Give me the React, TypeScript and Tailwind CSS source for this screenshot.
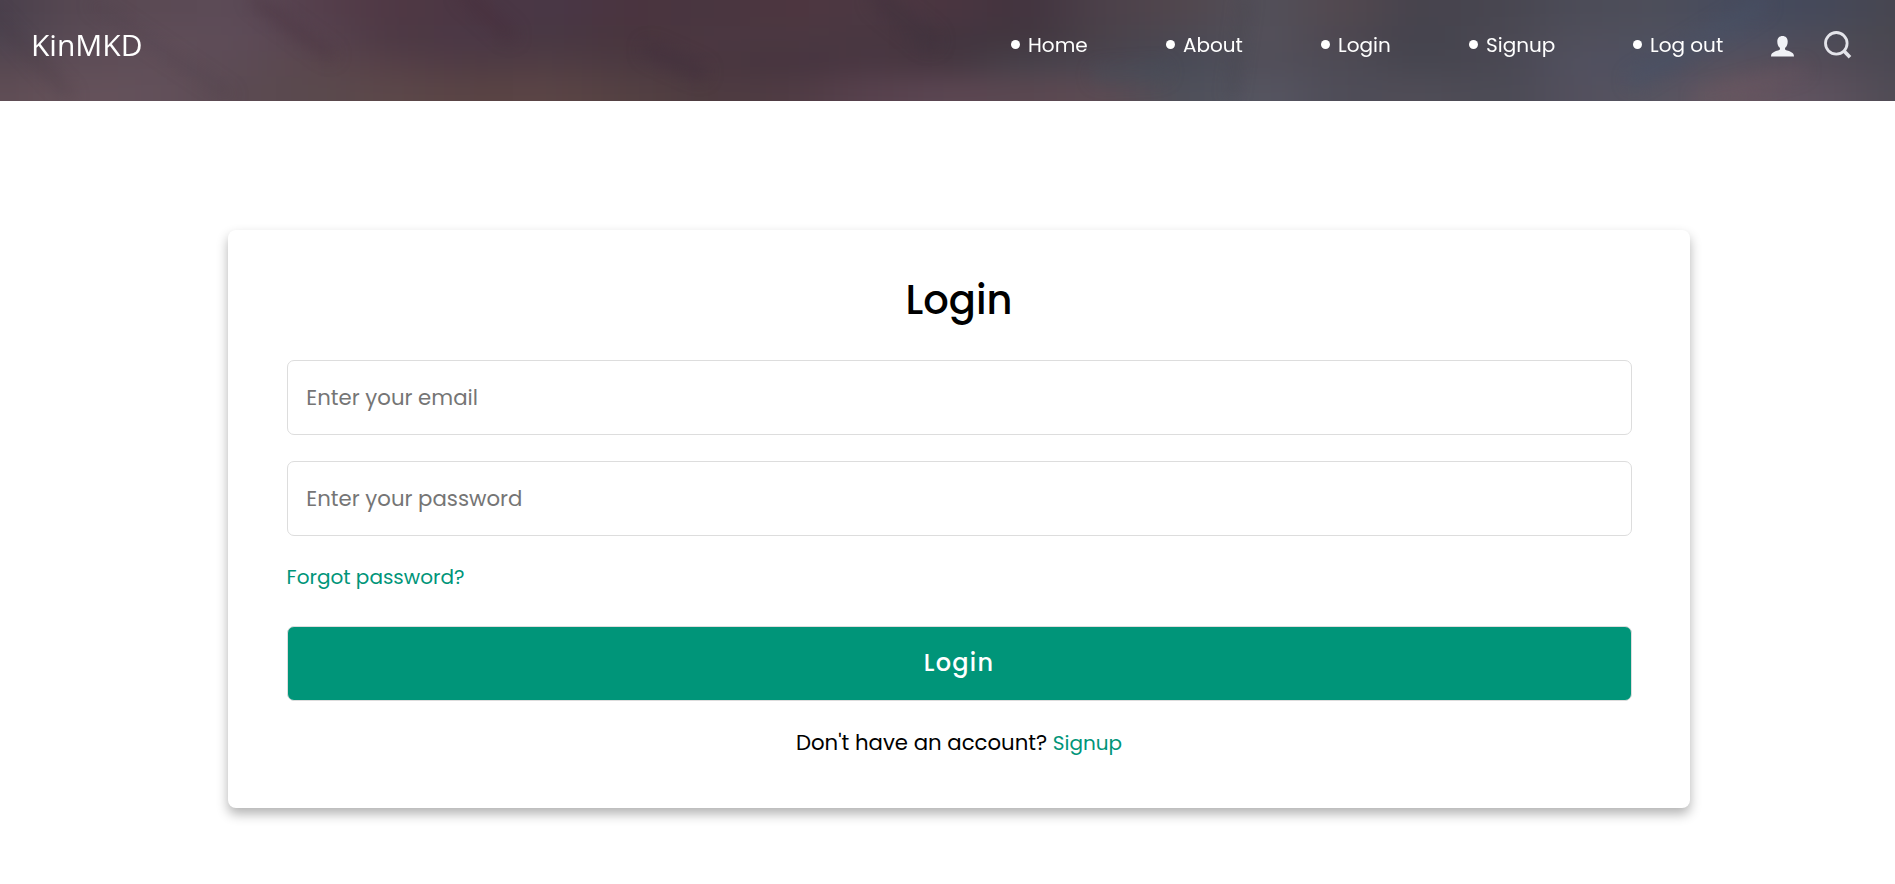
import React from "react";

const POP = "font-['Poppins','Inter',sans-serif]";

/* Cloud backdrop tones: four horizontal bands sampled every 79px. */
const BANDS: string[][] = [
  ["#4a404c", "#574852", "#5b4a54", "#5c4b57", "#553f4c", "#4f3844", "#4b3744", "#493746", "#4a343f", "#493640", "#4d3640", "#4c3842", "#4a3540", "#42343f", "#4c414a", "#51474e", "#52505a", "#52484f", "#46434d", "#484650", "#4c4c58", "#4d4e5a", "#464b5e", "#45495a", "#474650"],
  ["#4d4450", "#5a4b55", "#5f4d58", "#5e4c58", "#57434f", "#4d3944", "#4b3845", "#493843", "#49353d", "#4b3741", "#4b3841", "#493741", "#43353f", "#41363f", "#4a424a", "#4b4852", "#54515b", "#4d4750", "#44434d", "#4a4852", "#504f5b", "#4f505e", "#4d5062", "#4d4c59", "#49474f"],
  ["#55464f", "#5e4d57", "#604e58", "#5c4b55", "#5a474d", "#553f47", "#4f3b44", "#503d44", "#4b3941", "#4a3740", "#46343f", "#4a3742", "#463640", "#47424b", "#4b4550", "#484b57", "#524f5a", "#4e4b55", "#46454f", "#494752", "#525160", "#4b4f61", "#57505c", "#544b57", "#4b4853"],
  ["#5e4c54", "#65525a", "#62505a", "#5b4a52", "#5a494d", "#5b4749", "#594344", "#5a4445", "#534042", "#4d3b40", "#4f3b43", "#57414d", "#5b4652", "#5a4750", "#5c4b53", "#4d4f59", "#565561", "#4e4c57", "#4f4c56", "#4b4a54", "#53505e", "#565460", "#66555f", "#5e525f", "#4f4b54"],
];

function CloudBackdrop() {
  return (
    <svg className="absolute inset-0 h-full w-full" viewBox="0 0 1895 101" preserveAspectRatio="none" aria-hidden="true">
      <defs>
        <filter id="soft" x="-5%" y="-40%" width="110%" height="180%" colorInterpolationFilters="sRGB">
          <feGaussianBlur stdDeviation="30 12" />
        </filter>
        <filter id="wisp" filterUnits="userSpaceOnUse" x="-60" y="-60" width="2015" height="221" colorInterpolationFilters="sRGB">
          <feGaussianBlur stdDeviation="8" />
        </filter>
      </defs>
      <rect width="1895" height="101" fill="#4e4350" />
      <g filter="url(#soft)">
        {BANDS.map((row, r) =>
          row.map((fill, c) => (
            <rect
              key={`${r}-${c}`}
              x={c * 79 - (c === 0 ? 100 : 40)}
              y={r === 0 ? -40 : r * 25.5}
              width={c === 0 || c === 24 ? 160 : 80}
              height={r === 0 ? 66 : r === 3 ? 66 : 26}
              fill={fill}
            />
          ))
        )}
      </g>
      <g filter="url(#wisp)" fill="none" strokeLinecap="round">
        <path d="M-10 10 L70 95" stroke="#43343f" strokeWidth="9" opacity=".35" />
        <path d="M95 5 L230 95" stroke="#4a3a49" strokeWidth="8" opacity=".3" />
        <path d="M255 0 L330 55" stroke="#462f3c" strokeWidth="12" opacity=".4" />
        <path d="M465 -5 L510 35" stroke="#452936" strokeWidth="14" opacity=".35" />
        <path d="M650 50 L700 72" stroke="#402e3c" strokeWidth="16" opacity=".5" />
        <path d="M880 0 L930 40" stroke="#3d303c" strokeWidth="20" opacity=".45" />
        <path d="M1100 75 L1160 72" stroke="#444f5c" strokeWidth="18" opacity=".35" />
        <path d="M1245 0 L1232 95" stroke="#414049" strokeWidth="8" opacity=".4" />
        <path d="M1635 80 L1760 5" stroke="#485166" strokeWidth="16" opacity=".5" />
        <path d="M1700 98 L1800 70" stroke="#6f5963" strokeWidth="14" opacity=".3" />
      </g>
    </svg>
  );
}

const LINKS: { label: string; box: string }[] = [
  { label: "Home", box: "w-[155px]" },
  { label: "About", box: "w-[155px]" },
  { label: "Login", box: "w-[148px]" },
  { label: "Signup", box: "w-[164px]" },
  { label: "Log out", box: "w-[138px]" },
];

function Header() {
  return (
    <header className="relative h-[101px] overflow-hidden text-white">
      <CloudBackdrop />
      <div className="relative flex h-[90px] items-center justify-between pl-[31px]">
        <a className="font-['Open_Sans','Noto_Sans',sans-serif] text-[30px] leading-none">KinMKD</a>
        <nav className="flex items-center">
          <ul className={`${POP} flex text-[20px] leading-[30px]`}>
            {LINKS.map((l) => (
              <li key={l.label} className={`${l.box} flex items-center gap-2 whitespace-nowrap`}>
                <span className="mb-px size-[9px] shrink-0 rounded-full bg-white" />
                {l.label}
              </li>
            ))}
          </ul>
          <svg className="mt-[2px] h-[21px] w-[23px]" viewBox="0 0 23 21" fill="#f1f2f6" aria-label="Account">
            <path d="M11.5 0C8.3 0 6.3 2.2 6.3 5.5c0 2.600.9 5 2.500 6.300.4.9.2 1.900-.6 2.300C5.500 15.300 0 15.800 0 20.500h23c0-4.700-5.500-5.200-8.200-6.400-.8-.4-1-1.400-.6-2.300 1.600-1.300 2.500-3.700 2.500-6.300C16.700 2.200 14.700 0 11.500 0Z" />
          </svg>
          <svg className="mr-[43px] ml-[30px] h-[28px] w-[28px]" viewBox="0 0 28 28" fill="none" stroke="#e4e4ea" aria-label="Search">
            <circle cx="12.300" cy="12.300" r="10.800" strokeWidth="2.800" />
            <path d="M20 20l6 6.200" strokeWidth="3.600" />
          </svg>
        </nav>
      </div>
    </header>
  );
}

function Field({ type, placeholder }: { type: string; placeholder: string }) {
  return (
    <input
      type={type}
      placeholder={placeholder}
      className="mb-[26px] block h-[75px] w-full rounded-[7px] border border-[#dddddd] bg-white px-[18.75px] text-[21.25px] outline-none placeholder:text-[#757575]"
    />
  );
}

export default function App() {
  return (
    <div className="h-[884px] overflow-hidden bg-white">
      <Header />
      <main className={`${POP} mt-[129px] mr-[205px] ml-[228px] h-[578px] rounded-[8px] bg-white pr-[58.5px] pl-[58.6px] pt-[40px] text-black shadow-[0_6px_12px_rgba(0,0,0,0.3)]`}>
        <h1 className="mb-[30px] text-center text-[40px] leading-[61px] font-medium h-[60px]">Login</h1>
        <form onSubmit={(e) => e.preventDefault()}>
          <Field type="text" placeholder="Enter your email" />
          <Field type="password" placeholder="Enter your password" />
          <a className="block text-[20px] leading-[30px] text-[#009579]">Forgot password?</a>
          <button
            type="submit"
            className="mt-[34px] block h-[75px] w-full rounded-[7px] border border-[#dddddd] bg-[#009579] pb-px text-[24px] font-medium tracking-[1.25px] text-white"
          >
            Login
          </button>
        </form>
        <p className="mt-[26px] text-center text-[21.25px] leading-[32px]">
          Don't have an account? <a className="text-[20px] text-[#009579]">Signup</a>
        </p>
      </main>
    </div>
  );
}
